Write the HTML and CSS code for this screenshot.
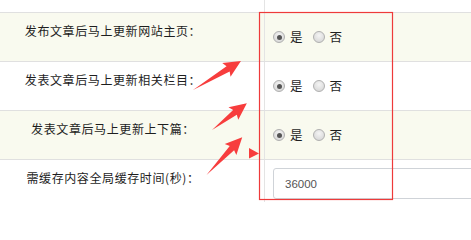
FILE: index.html
```html
<!DOCTYPE html>
<html lang="zh-CN">
<head>
<meta charset="utf-8">
<title>设置</title>
<link rel="stylesheet" href="styles.css">
</head>
<body>
<div class="page">
  <div class="table">
    <div class="row row-partial">
      <div class="cell label"></div>
      <div class="cell value"></div>
    </div>
    <div class="row alt">
      <div class="cell label"><span>发布文章后马上更新网站主页：</span></div>
      <div class="cell value">
        <label class="opt"><input type="radio" name="r1" checked><span>是</span></label>
        <label class="opt"><input type="radio" name="r1"><span>否</span></label>
      </div>
    </div>
    <div class="row">
      <div class="cell label"><span>发表文章后马上更新相关栏目：</span></div>
      <div class="cell value">
        <label class="opt"><input type="radio" name="r2" checked><span>是</span></label>
        <label class="opt"><input type="radio" name="r2"><span>否</span></label>
      </div>
    </div>
    <div class="row alt">
      <div class="cell label"><span>发表文章后马上更新上下篇：</span></div>
      <div class="cell value">
        <label class="opt"><input type="radio" name="r3" checked><span>是</span></label>
        <label class="opt"><input type="radio" name="r3"><span>否</span></label>
      </div>
    </div>
    <div class="row">
      <div class="cell label"><span>需缓存内容全局缓存时间(秒)：</span></div>
      <div class="cell value value-input">
        <input class="text-input" type="text" value="36000">
      </div>
    </div>
  </div>

  <svg class="annotations" width="471" height="202" viewBox="0 0 471 202" xmlns="http://www.w3.org/2000/svg">
    <rect x="259.5" y="12.5" width="133" height="187" fill="none" stroke="#ee3a3a" stroke-width="1.2"/>
    <g fill="#f73d3d">
      <g transform="translate(193 90) rotate(-31.1)">
        <polygon points="0,0 41,-3 39,-8 56,0 39,8 41,3"/>
      </g>
      <g transform="translate(212 130) rotate(-37.6)">
        <polygon points="0,0 29,-3 27,-8 44,0 27,8 29,3"/>
      </g>
      <g transform="translate(206.5 175) rotate(-46.6)">
        <polygon points="0,0 37,-3 35,-8 52,0 35,8 37,3"/>
      </g>
      <polygon points="249,148 249,158.5 259,153.5"/>
    </g>
  </svg>
</div>
</body>
</html>
```

FILE: styles.css
```css
html, body {
  margin: 0;
  padding: 0;
  background: #ffffff;
}

body {
  width: 471px;
  height: 202px;
  overflow: hidden;
  font-family: "Noto Sans CJK SC", "Noto Sans", sans-serif;
  font-size: 12px;
  color: #1e1e1e;
}

.page {
  position: relative;
  width: 471px;
  height: 202px;
  overflow: hidden;
}

.table {
  display: flex;
  flex-direction: column;
  width: 640px;
}

.row {
  display: grid;
  grid-template-columns: 265px 1fr;
  height: 48px;
  border-bottom: 1px solid #e0e0e0;
  background: #ffffff;
}

.row.alt {
  background: #f9faef;
}

.row-partial {
  height: 12px;
}

.cell {
  display: flex;
  align-items: center;
}

.label {
  justify-content: center;
  padding-right: 38px;
  padding-bottom: 12px;
  box-sizing: border-box;
  border-right: 1px solid #e4e4e4;
  letter-spacing: 0.6px;
  white-space: nowrap;
  line-height: 16px;
}

.value {
  padding-left: 8px;
  gap: 9px;
}

.opt {
  display: inline-flex;
  align-items: center;
  gap: 5px;
  font-size: 12.5px;
  line-height: 16px;
}

.opt input[type="radio"] {
  appearance: none;
  -webkit-appearance: none;
  margin: 0;
  width: 12px;
  height: 12px;
  border-radius: 50%;
  border: 1px solid #b0b0b0;
  background: radial-gradient(circle at 50% 35%, #f4f4f4 0%, #dcdcdc 70%, #cfcfcf 100%);
  box-sizing: border-box;
  position: relative;
}

.opt input[type="radio"]:checked::after {
  content: "";
  position: absolute;
  left: 2.5px;
  top: 2.5px;
  width: 5px;
  height: 5px;
  border-radius: 50%;
  background: #555555;
}

.opt + .opt {
  margin-left: 1px;
}

.value-input {
  align-items: flex-start;
  padding-top: 8px;
  box-sizing: border-box;
}

.text-input {
  width: 260px;
  height: 31px;
  box-sizing: border-box;
  border: 1px solid #cfd3d8;
  border-radius: 3px;
  padding: 0 11px;
  font-family: "Liberation Sans", Arial, sans-serif;
  font-size: 11.5px;
  color: #555555;
  background: #ffffff;
  outline: none;
}

.annotations {
  position: absolute;
  left: 0;
  top: 0;
  pointer-events: none;
}
```
